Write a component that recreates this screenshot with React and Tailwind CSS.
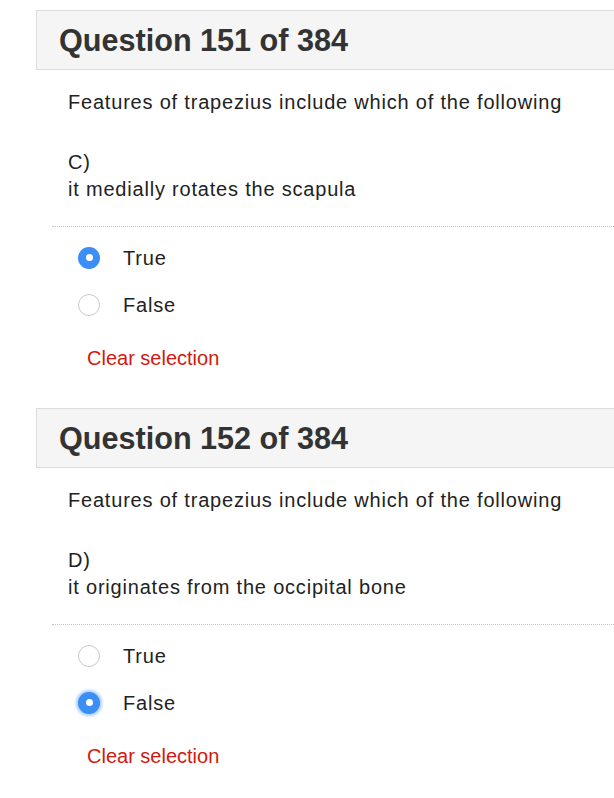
import React, { useState } from 'react';

const questions = [
    { num: 151, letter: "C)", text: "it medially rotates the scapula", answer: "true", focused: false },
    { num: 152, letter: "D)", text: "it originates from the occipital bone", answer: "false", focused: true },
];

const Radio = ({ checked, focused, label, onClick }) => (
    <button onClick={onClick} className="flex items-center h-[27px] text-left">
        {checked ? (
            <span className={`w-[22px] h-[22px] rounded-full bg-[#3a8ef6] flex items-center justify-center ${focused ? "shadow-[0_0_3px_2px_rgba(58,142,246,0.45)]" : ""}`}>
                <span className="w-[7px] h-[7px] rounded-full bg-white"></span>
            </span>
        ) : (
            <span className="w-[22px] h-[22px] rounded-full bg-white border border-[#c9c9c9]"></span>
        )}
        <span className="ml-[23px] text-[20px] tracking-[0.8px] text-[#222]">{label}</span>
    </button>
);

const Question = ({ q }) => {
    const [value, setValue] = useState(q.answer);

    return (
        <div className="pb-[36px]">
            <div className="ml-[36px] mr-[-10px] h-[60px] border border-[#dcdcdc] bg-[#f5f5f5] flex items-center px-[22px]">
                <h2 className="text-[30.6px] font-bold text-[#333] leading-none mt-[1px]">
                    Question {q.num} of 384
                </h2>
            </div>

            <div className="pl-[68px] pt-[19px] text-[20px] leading-[27px] tracking-[0.8px] text-[#222]">
                <p>Features of trapezius include which of the following</p>
                <div className="mt-[33px]">
                    <p>{q.letter}</p>
                    <p>{q.text}</p>
                </div>
            </div>

            <div className="ml-[52px] mt-[23px] border-t border-dotted border-[#c4c4c4]"></div>

            <div className="pl-[78px] pt-[17px] flex flex-col gap-[20px]">
                <Radio checked={value === "true"} focused={q.focused} label="True" onClick={() => setValue("true")} />
                <Radio checked={value === "false"} focused={q.focused} label="False" onClick={() => setValue("false")} />
            </div>

            <div className="pl-[87px] pt-[27px]">
                <button onClick={() => setValue("")} className="text-[20px] leading-[27px] text-[#d3190e]">
                    Clear selection
                </button>
            </div>
        </div>
    );
};

export default function App() {
    return (
        <div className="min-h-screen bg-white overflow-hidden pt-[10px]" style={{ fontFamily: '"Liberation Sans", Arial, sans-serif' }}>
            {questions.map((q) => (
                <Question key={q.num} q={q} />
            ))}
        </div>
    );
}
